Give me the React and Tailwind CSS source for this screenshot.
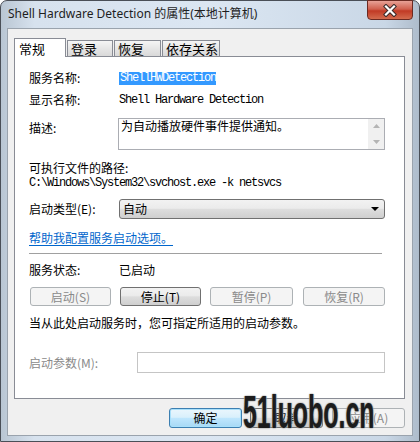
import React from 'react';

const cjk = "font-['Noto_Sans_CJK_SC','Noto_Sans',sans-serif]";
const mono = "font-['Liberation_Mono','Noto_Sans_CJK_SC',monospace] tracking-[-1.2px]";

function Button({ children, w, disabled, focus }) {
  let look = 'border-[#707070] bg-[linear-gradient(to_bottom,#f2f2f2,#ebebeb_46%,#dddddd_52%,#cfcfcf)] text-black';
  if (disabled) look = 'border-[#adb2b5] bg-[#f4f4f4] text-[#8a8a8a]';
  if (focus) look = 'border-[#3c7fb1] bg-[linear-gradient(to_bottom,#eaf6fd,#d9f0fc_46%,#bee6fd_52%,#a7d9f5)] shadow-[inset_0_0_0_1px_#a8e0fb] text-black';
  return (
    <div className={`${w} h-full border rounded-[3px] flex items-center justify-center text-[12px] leading-[12px] ${look}`}>
      {children}
    </div>
  );
}

function Tab({ label, active, w }) {
  if (active) {
    return (
      <div className={`${w} h-[19px] -mb-px relative z-10 bg-white border border-b-0 border-[#898c95] flex items-center pl-[4px] text-[13px] leading-[13px]`}>
        {label}
      </div>
    );
  }
  return (
    <div className={`${w} h-[16px] border border-b-0 border-[#898c95] bg-[linear-gradient(to_bottom,#f5f5f5,#e6e6e6_50%,#d9d9d9)] flex items-center pl-[3px] text-[13px] leading-[13px]`}>
      {label}
    </div>
  );
}

export default function App() {
  return (
    <div className={`w-[420px] h-[442px] relative overflow-hidden ${cjk} text-black`}>
      <div className="w-full h-full rounded-t-[7px] border border-[#4a4f57] bg-[linear-gradient(to_right,#b9c6d3,#d7e2ee_8%,#dbe6f2_50%,#c9d7e6_92%,#aebccb)] flex flex-col">
        {/* title bar */}
        <div className="h-[27px] flex shrink-0">
          <div className="pl-[7px] pt-[6px] text-[12px] leading-[14px] font-['Noto_Sans','Noto_Sans_CJK_SC',sans-serif] text-[#1e1e1e]">
            Shell Hardware Detection 的属性(本地计算机)
          </div>
          <div className="ml-auto mr-[6px] -mt-px w-[46px] h-[20px] rounded-b-[4px] border border-[#6b2a22] bg-[linear-gradient(to_bottom,#e8a196,#d0604e_45%,#c13a25_55%,#d36b4e)] flex items-center justify-center">
            <svg width="14" height="13" viewBox="0 0 14 13">
              <path d="M3 2.5 L11 10.5 M11 2.5 L3 10.5" stroke="#3a2a2a" strokeWidth="4.2" strokeLinecap="square" />
              <path d="M3 2.5 L11 10.5 M11 2.5 L3 10.5" stroke="#ffffff" strokeWidth="2.2" strokeLinecap="square" />
            </svg>
          </div>
        </div>

        {/* dialog body */}
        <div className="ml-[6px] w-[406px] h-[408px] bg-[#f0f0f0] border border-[#9aa3ad] pt-[9px] pl-[6px] flex flex-col">
          {/* tabs */}
          <div className="flex items-end h-[18px] gap-px">
            <Tab label="常规" active w="w-[52px]" />
            <Tab label="登录" w="w-[46px]" />
            <Tab label="恢复" w="w-[47px]" />
            <Tab label="依存关系" w="w-[58px]" />
          </div>

          {/* tab page */}
          <div className="w-[391px] h-[343px] bg-white border border-[#898c95] pl-[14px] flex flex-col text-[12px] leading-[12px]">
            <div className="mt-[15px] h-[12px] flex items-center">
              <div className="w-[90px]">服务名称:</div>
              <div className={`${mono} bg-[#3399ff] text-white h-[13px] w-[97px] flex items-center pl-px`}>ShellHWDetection</div>
            </div>

            <div className="mt-[10px] h-[12px] flex items-center">
              <div className="w-[90px]">显示名称:</div>
              <div className={mono}>Shell Hardware Detection</div>
            </div>

            <div className="mt-[12px] flex items-start">
              <div className="w-[89px] mt-[4px]">描述:</div>
              <div className="w-[267px] h-[32px] border border-[#abadb3] flex">
                <div className="flex-1 pl-[2px] pt-[1px]">为自动播放硬件事件提供通知。</div>
                <div className="w-[16px] h-full bg-[#f0f0f0] flex flex-col items-center justify-between py-[5px]">
                  <svg width="7" height="4" viewBox="0 0 7 4"><path d="M0 4 L3.5 0 L7 4 Z" fill="#b4b4b4" /></svg>
                  <svg width="7" height="4" viewBox="0 0 7 4"><path d="M0 0 L3.5 4 L7 0 Z" fill="#b4b4b4" /></svg>
                </div>
              </div>
            </div>

            <div className="mt-[12px] h-[12px]">可执行文件的路径:</div>
            <div className={`mt-[3px] h-[12px] ${mono}`}>C:\Windows\System32\svchost.exe -k netsvcs</div>

            <div className="mt-[10px] h-[20px] flex items-center">
              <div className="w-[90px]">启动类型(E):</div>
              <div className="w-[266px] h-[20px] border border-[#707070] rounded-[3px] bg-[linear-gradient(to_bottom,#f2f2f2,#ebebeb_46%,#dddddd_52%,#cfcfcf)] flex items-center pl-[3px] pr-[5px]">
                <span>自动</span>
                <svg className="ml-auto" width="8" height="4" viewBox="0 0 8 4"><path d="M0 0 L8 0 L4 4 Z" fill="#000" /></svg>
              </div>
            </div>

            <div className="mt-[13px] h-[12px]">
              <span className="text-[#0066cc] underline underline-offset-2">帮助我配置服务启动选项。</span>
            </div>

            <div className="mt-[9px] w-[353px] h-px bg-[#a0a0a0]" />

            <div className="mt-[10px] h-[12px] flex items-center">
              <div className="w-[90px]">服务状态:</div>
              <div>已启动</div>
            </div>

            <div className="mt-[11px] h-[19px] ml-px flex gap-[9px]">
              <Button w="w-[81px]" disabled>启动(S)</Button>
              <Button w="w-[81px]">停止(T)</Button>
              <Button w="w-[83px]" disabled>暂停(P)</Button>
              <div className="ml-px h-full">
                <Button w="w-[82px]" disabled>恢复(R)</Button>
              </div>
            </div>

            <div className="mt-[11px] h-[12px]">当从此处启动服务时，您可指定所适用的启动参数。</div>

            <div className="mt-[23px] h-[21px] flex items-center">
              <div className="w-[108px] text-[#8a8a8a]">启动参数(M):</div>
              <div className="w-[248px] h-[21px] border border-[#c5c5c5] bg-white" />
            </div>
          </div>

          {/* bottom buttons */}
          <div className="mt-[9px] h-[20px] w-[391px] flex justify-end gap-[8px]">
            <Button w="w-[73px]" focus>确定</Button>
            <Button w="w-[73px]">取消</Button>
            <div className="ml-px h-full">
              <Button w="w-[73px]" disabled>应用(A)</Button>
            </div>
          </div>
        </div>
      </div>

      {/* watermark */}
      <div className="absolute left-[243px] top-[388px] w-[133px] overflow-visible pointer-events-none">
        <div className="origin-left scale-x-[0.53] whitespace-nowrap font-['Liberation_Sans',sans-serif] font-bold text-[47px] leading-[47px] text-[#1c1c1c] [text-shadow:0_0_2px_#9a9a9a,0_0_2px_#9a9a9a,0_0_1px_#bbbbbb]">
          51luobo.cn
        </div>
      </div>
    </div>
  );
}
